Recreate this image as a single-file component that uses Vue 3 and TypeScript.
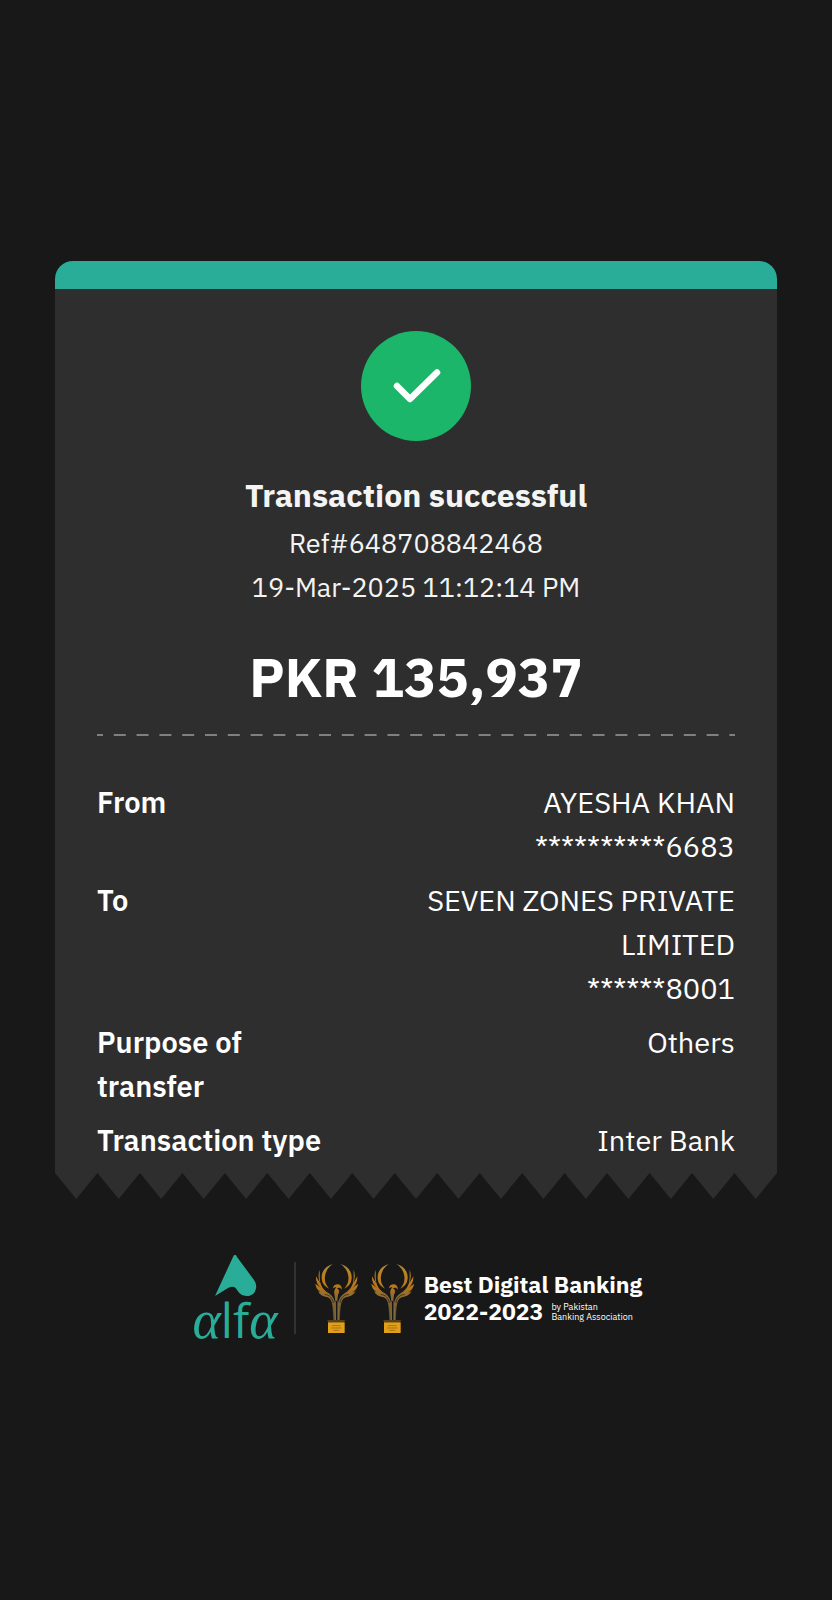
<script setup lang="ts">
interface Detail {
  label: string
  lines: string[]
}

const details: Detail[] = [
  { label: 'From', lines: ['AYESHA KHAN', '**********6683'] },
  { label: 'To', lines: ['SEVEN ZONES PRIVATE LIMITED', '******8001'] },
  { label: 'Purpose of transfer', lines: ['Others'] },
  { label: 'Transaction type', lines: ['Inter Bank'] },
]

const toothCount = 17
const teeth =
  'M0 0' +
  Array.from({ length: toothCount }, (_, i) => `L${i * 42 + 21} 26L${(i + 1) * 42} 0`).join('') +
  'Z'
</script>

<template>
  <main class="page">
    <article class="receipt">
      <div class="band"></div>
      <div class="body">
        <header class="summary">
          <svg class="status" viewBox="0 0 110 110" role="img" aria-label="Success">
            <circle cx="55" cy="55" r="55" fill="#1bb66a" />
            <path d="M36 55L49 68L76 41.500" fill="none" stroke="#fff" stroke-width="6.500" stroke-linecap="round" stroke-linejoin="round" />
          </svg>
          <h1 class="title">Transaction successful</h1>
          <p class="meta">Ref#648708842468</p>
          <p class="meta">19-Mar-2025 11:12:14 PM</p>
          <p class="amount">PKR 135,937</p>
        </header>
        <svg class="rule" width="100%" height="2" aria-hidden="true">
          <line x1="0" y1="1" x2="100%" y2="1" stroke="#808080" stroke-width="2" stroke-dasharray="12 10.800" stroke-dashoffset="6" />
        </svg>
        <dl class="details">
          <div v-for="item in details" :key="item.label" class="row">
            <dt>{{ item.label }}</dt>
            <dd>
              <span v-for="line in item.lines" :key="line">{{ line }}</span>
            </dd>
          </div>
        </dl>
      </div>
      <svg class="teeth" viewBox="0 0 714 26" preserveAspectRatio="none" aria-hidden="true">
        <path :d="teeth" fill="#2e2e2e" />
      </svg>
    </article>

    <footer class="footer">
      <svg class="alfa" viewBox="0 0 84 86" role="img" aria-label="alfa">
        <path d="M41 0C42 0 42 0 43 2L60 25C65 32 61 41 53 41C48 41 45 38 43 35C41 31 38 31 34 33L21 41L39 2C40 0 40 0 41 0Z" fill="#29ad98" />
        <text x="41" y="83" text-anchor="middle"><tspan class="greek">α</tspan><tspan class="latin">lf</tspan><tspan class="greek">α</tspan></text>
      </svg>
      <div class="divider"></div>
      <div class="trophies">
        <svg v-for="n in 2" :key="n" class="trophy" viewBox="45 36 138 213" aria-hidden="true">
          <defs>
            <linearGradient :id="`gold${n}`" x1="0" y1="36" x2="0" y2="208" gradientUnits="userSpaceOnUse">
              <stop offset="0" stop-color="#b48a2c" />
              <stop offset="0.4" stop-color="#b9781c" />
              <stop offset="0.6" stop-color="#8a6a36" />
              <stop offset="1" stop-color="#5e4a22" />
            </linearGradient>
          </defs>
          <g :fill="`url(#gold${n})`">
            <path d="M102 39C80 44 67 61 68 82C69 97 77 107 90 113C80 101 76 90 78 76C80 59 89 47 102 39Z" />
            <path d="M124 39C146 44 159 61 158 82C157 97 149 107 136 113C146 101 150 90 148 76C146 59 137 47 124 39Z" />
            <path d="M62 56C57 70 58 84 63 97L51 76C50 90 55 102 66 111L49 98C51 113 59 121 72 127L57 121C63 132 73 137 85 139C98 143 102 155 103 208L110 208L108 159C107 143 100 133 87 125C70 115 62 98 62 78Z" />
            <path d="M164 56C169 70 168 84 163 97L175 76C176 90 171 102 160 111L177 98C175 113 167 121 154 127L170 121C163 132 153 137 141 139C128 143 124 155 123 208L116 208L118 159C119 143 126 133 139 125C156 115 164 98 164 78Z" />
            <path d="M101 113C103 103 110 99 118 100C126 102 129 109 128 116C124 110 119 109 114 112C122 117 122 124 117 131L115 150L109 150L106 128C104 120 108 114 112 109C108 108 104 110 101 113Z" />
          </g>
          <path d="M65 88C67 108 78 121 96 128M161 88C159 108 148 121 130 128M77 130C92 132 100 140 103 156M149 130C134 132 126 140 123 156" fill="none" stroke="#24190c" stroke-width="2" />
          <path d="M109 151V207M117 151V207" stroke="#b09a5c" stroke-width="2" />
          <path d="M85 207H138L136 214H87Z" fill="#54411c" />
          <path d="M87 214H137V246H87Z" fill="#e2a01a" />
          <path d="M99 224H125M96 231H128M103 238H121" stroke="#ab7113" stroke-width="3" />
        </svg>
      </div>
      <div class="award">
        <strong>Best Digital Banking</strong>
        <div class="award-line">
          <strong>2022-2023</strong>
          <small>by Pakistan<br />Banking Association</small>
        </div>
      </div>
    </footer>
  </main>
</template>

<style>
body {
  margin: 0;
  background: #181818;
}
</style>

<style scoped>
.page {
  box-sizing: border-box;
  min-height: 100vh;
  padding: 42px 55px 40px;
  display: flex;
  flex-direction: column;
  justify-content: center;
  background: #181818;
  color: #fff;
  font-family: 'IBM Plex Sans', Roboto, 'Noto Sans', sans-serif;
}

.band {
  height: 28px;
  border-radius: 18px 18px 0 0;
  background: #29ad98;
}

.body {
  padding: 42px 42px 11px;
  background: #2e2e2e;
}

.summary {
  display: flex;
  flex-direction: column;
  align-items: center;
  text-align: center;
}

.status {
  width: 110px;
  height: 110px;
  margin-bottom: 32px;
}

.title {
  margin: 0 0 4px;
  font-size: 32px;
  line-height: 44px;
  font-weight: 700;
  color: #f4f4f4;
}

.meta {
  margin: 0;
  font-size: 27px;
  line-height: 44px;
  color: #f4f4f4;
}

.amount {
  margin: 32px 0 21px;
  font-size: 54px;
  line-height: 72px;
  font-weight: 700;
}

.rule {
  display: block;
}

.details {
  margin: 44px 0 0;
  display: flex;
  flex-direction: column;
  gap: 10px;
  font-size: 29px;
  line-height: 44px;
}

.row {
  display: flex;
  justify-content: space-between;
}

dt {
  width: 38%;
  font-weight: 600;
}

dd {
  width: 54%;
  margin: 0;
  display: flex;
  flex-direction: column;
  text-align: right;
}

.teeth {
  display: block;
  width: 100%;
  height: 26px;
}

.footer {
  margin-top: 56px;
  padding-left: 4px;
  display: flex;
  justify-content: center;
  align-items: center;
}

.alfa {
  width: 84px;
  height: 86px;
  flex: none;
  overflow: visible;
}

.alfa text {
  fill: #29ad98;
}

.greek {
  font-family: 'Liberation Serif', serif;
  font-size: 54px;
  font-style: italic;
}

.latin {
  font-family: 'Open Sans', sans-serif;
  font-size: 48px;
}

.divider {
  width: 2px;
  height: 72px;
  margin: 0 18px 0 16px;
  background: #323232;
}

.trophies {
  display: flex;
  gap: 10px;
}

.trophy {
  width: 46px;
  height: 71px;
}

.award {
  margin-left: 8px;
  font-size: 23px;
  line-height: 27px;
  white-space: nowrap;
}

.award strong {
  display: block;
  font-weight: 700;
}

.award-line {
  display: flex;
  align-items: center;
  gap: 8px;
}

.award small {
  font-size: 9px;
  line-height: 10px;
}
</style>
